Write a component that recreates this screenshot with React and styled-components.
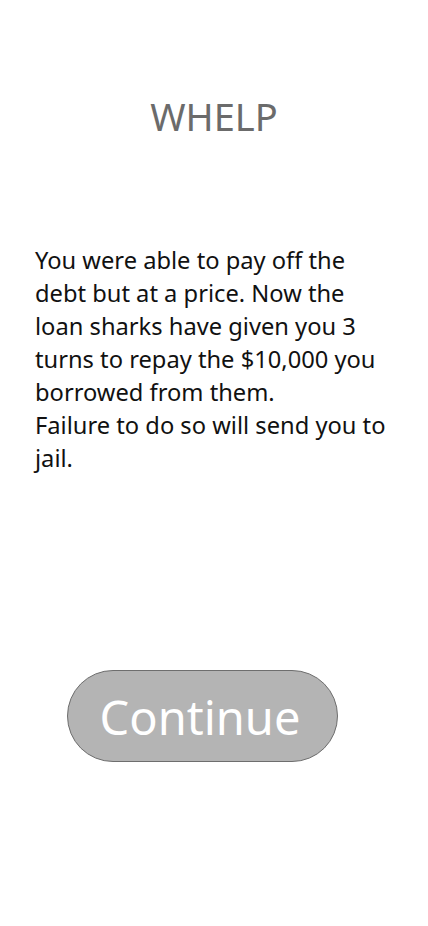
import React from "react";
import styled, { createGlobalStyle } from "styled-components";

const Global = createGlobalStyle`
  html, body { margin: 0; padding: 0; background: #fff; }
  body { font-family: "Noto Sans", "Open Sans", sans-serif; }
`;

const Screen = styled.div`
  width: 428px;
  height: 926px;
  display: flex;
  flex-direction: column;
  box-sizing: border-box;
  padding-top: 93px;
`;

const Title = styled.h1`
  margin: 0;
  text-align: center;
  font-weight: 400;
  font-size: 38px;
  line-height: 46px;
  color: #6b6b6b;
`;

const Body = styled.p`
  margin: 105px 0 0 0;
  padding: 0 35px;
  font-size: 23.7px;
  line-height: 33px;
  color: #111;
  white-space: nowrap;
`;

const ButtonRow = styled.div`
  display: flex;
  margin-top: 195px;
  padding-left: 67px;
`;

const ContinueButton = styled.button`
  width: 271px;
  height: 92px;
  border-radius: 46px;
  border: 1px solid #6e6e6e;
  background: #b4b4b4;
  color: #fff;
  font-family: "Noto Sans", "Open Sans", sans-serif;
  font-size: 47px;
  line-height: 1;
  padding: 3px 5px 0 0;
  cursor: pointer;
`;

export default function App() {
  return (
    <>
      <Global />
      <Screen>
        <Title>WHELP</Title>
        <Body>
          You were able to pay off the<br />
          debt but at a price. Now the<br />
          loan sharks have given you 3<br />
          turns to repay the $10,000 you<br />
          borrowed from them.<br />
          Failure to do so will send you to<br />
          jail.
        </Body>
        <ButtonRow>
          <ContinueButton>Continue</ContinueButton>
        </ButtonRow>
      </Screen>
    </>
  );
}
